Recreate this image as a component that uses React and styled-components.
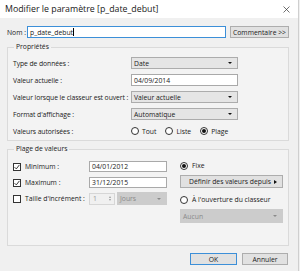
import React from "react"
import styled, { createGlobalStyle } from "styled-components"

const FS = "6.8px"

const GlobalStyle = createGlobalStyle`
    html, body {
        margin: 0;
        padding: 0;
        background: #f0f0f0;
    }
    body {
        font-family: "Open Sans", "Liberation Sans", sans-serif;
        color: #1a1a1a;
    }
`

const Window = styled.div`
    width: 299px;
    height: 271px;
    box-sizing: border-box;
    border-right: 1px solid #cfcfcf;
    background: #f0f0f0;
    display: flex;
    flex-direction: column;
`

const TitleBar = styled.div`
    height: 18px;
    flex: none;
    background: #fff;
    display: flex;
    align-items: center;
    justify-content: space-between;
    padding: 0 8px 0 5px;
    font-size: 8.8px;
    color: #202020;
`

const Body = styled.div`
    flex: 1;
    display: flex;
    flex-direction: column;
    padding: 8px 9px 0 7px;
`

const NameRow = styled.div`
    display: flex;
    align-items: center;
    height: 12px;
    font-size: ${FS};
    label {
        width: 21px;
    }
`

const TextBox = styled.div`
    box-sizing: border-box;
    height: ${p => p.$h || 12}px;
    width: ${p => p.$w ? p.$w + "px" : "auto"};
    flex: ${p => p.$w ? "none" : 1};
    margin-right: ${p => p.$mr || 0}px;
    background: #fff;
    border: 1px solid ${p => p.$focus ? "#3c8fd8" : "#a9a9a9"};
    display: flex;
    align-items: center;
    padding-left: 2px;
    font-size: ${FS};
    .caret {
        display: inline-block;
        width: 1px;
        height: 8px;
        background: #000;
    }
`

const Button = styled.div`
    box-sizing: border-box;
    width: ${p => p.$w}px;
    height: ${p => p.$h || 12}px;
    background: #e1e1e1;
    border: 1px solid ${p => p.$default ? "#3c8fd8" : "#adadad"};
    display: flex;
    align-items: center;
    justify-content: ${p => p.$arrow ? "space-between" : "center"};
    padding: ${p => p.$arrow ? "0 5px 0 8px" : "0"};
    font-size: ${FS};
    color: #222;
    flex: none;
`

const RightArrow = styled.span`
    border-top: 2px solid transparent;
    border-bottom: 2px solid transparent;
    border-left: 3px solid #111;
`

const Group = styled.fieldset`
    margin: ${p => p.$top}px 0 0 0;
    padding: ${p => p.$pt}px 5px ${p => p.$pb}px 5px;
    border: 1px solid #dadada;
    background: #f3f3f3;
    min-width: 0;
    legend {
        padding: 0 2px;
        margin-left: 1px;
        font-size: ${FS};
        line-height: 10px;
        color: #222;
    }
`

const FieldList = styled.div`
    display: flex;
    flex-direction: column;
    gap: 5px;
    font-size: ${FS};
`

const FieldRow = styled.div`
    display: flex;
    align-items: center;
    height: 12px;
`

const FieldLabel = styled.span`
    width: 118px;
    flex: none;
    white-space: nowrap;
    letter-spacing: -0.08px;
`

const Select = styled.div`
    box-sizing: border-box;
    height: ${p => p.$h || 12}px;
    width: ${p => p.$w || 107}px;
    flex: none;
    background: ${p => p.$disabled ? "#cccccc" : "#e5e5e5"};
    border: 1px solid ${p => p.$disabled ? "#cccccc" : "#acacac"};
    display: flex;
    align-items: center;
    justify-content: space-between;
    padding: 0 5px 0 2px;
    font-size: ${FS};
    color: ${p => p.$disabled ? "#8a8a8a" : "#1a1a1a"};
    &::after {
        content: "";
        border-left: 2px solid transparent;
        border-right: 2px solid transparent;
        border-top: 2px solid ${p => p.$disabled ? "#8a8a8a" : "#111"};
    }
`

const RadioGroup = styled.div`
    display: flex;
    align-items: center;
    gap: 9px;
`

const RadioLabel = styled.span`
    display: flex;
    align-items: center;
    gap: 3px;
`

const Radio = styled.span`
    box-sizing: border-box;
    width: 8px;
    height: 8px;
    flex: none;
    border-radius: 50%;
    border: 1px solid #333;
    background: #fff;
    display: flex;
    align-items: center;
    justify-content: center;
    &::after {
        content: "";
        width: 4px;
        height: 4px;
        border-radius: 50%;
        background: ${p => p.$checked ? "#111" : "transparent"};
    }
`

const Check = styled.span`
    box-sizing: border-box;
    width: 8px;
    height: 8px;
    border: 1px solid #333;
    background: #fff;
    display: flex;
    align-items: center;
    justify-content: center;
    flex: none;
`

const RangeBody = styled.div`
    display: flex;
    justify-content: space-between;
    font-size: ${FS};
`

const LeftCol = styled.div`
    display: flex;
    flex-direction: column;
    gap: 5px;
    padding-top: 1px;
`

const CheckRow = styled.div`
    display: flex;
    align-items: center;
    height: 11px;
`

const CheckLabel = styled.span`
    width: ${p => p.$w ? p.$w + "px" : "auto"};
    margin-left: 4px;
    white-space: nowrap;
`

const Spinner = styled.div`
    box-sizing: border-box;
    width: 26px;
    height: 12px;
    border: 1px solid #d6d6d6;
    background: #f0f0f0;
    color: #9a9a9a;
    display: flex;
    align-items: center;
    justify-content: space-between;
    padding: 0 3px;
    margin-right: 2px;
    .arrows {
        display: flex;
        flex-direction: column;
        gap: 1px;
    }
    .up, .down {
        border-left: 1.5px solid transparent;
        border-right: 1.5px solid transparent;
    }
    .up { border-bottom: 2px solid #9a9a9a; }
    .down { border-top: 2px solid #9a9a9a; }
`

const RightCol = styled.div`
    width: 103px;
    display: flex;
    flex-direction: column;
`

const Gap = styled.div`
    height: ${p => p.$h}px;
    flex: none;
`

const Footer = styled.div`
    display: flex;
    justify-content: flex-end;
    gap: 5px;
    margin-top: 7px;
    padding-right: 1px;
`

function CheckBox({ checked }) {
    return (
        <Check>
            {checked && (
                <svg width="6" height="6" viewBox="0 0 6 6">
                    <path d="M0.6 3.2 L2.3 4.9 L5.4 0.9" fill="none" stroke="#222" strokeWidth="0.9" />
                </svg>
            )}
        </Check>
    )
}

export default function App() {
    return (
        <Window>
            <GlobalStyle />
            <TitleBar>
                <span>Modifier le paramètre [p_date_debut]</span>
                <svg width="7" height="7" viewBox="0 0 7 7">
                    <path d="M0.5 0.5 L6.5 6.5 M6.5 0.5 L0.5 6.5" stroke="#333" strokeWidth="0.7" />
                </svg>
            </TitleBar>
            <Body>
                <NameRow>
                    <label>Nom :</label>
                    <TextBox $focus $w={199} $mr={4}>p_date_debut<span className="caret" /></TextBox>
                    <Button $w={59}>Commentaire &gt;&gt;</Button>
                </NameRow>

                <Group $top={4} $pt={5} $pb={3}>
                    <legend>Propriétés</legend>
                    <FieldList>
                        <FieldRow>
                            <FieldLabel>Type de données :</FieldLabel>
                            <Select>Date</Select>
                        </FieldRow>
                        <FieldRow>
                            <FieldLabel>Valeur actuelle :</FieldLabel>
                            <TextBox $w={107}>04/09/2014</TextBox>
                        </FieldRow>
                        <FieldRow>
                            <FieldLabel>Valeur lorsque le classeur est ouvert :</FieldLabel>
                            <Select>Valeur actuelle</Select>
                        </FieldRow>
                        <FieldRow>
                            <FieldLabel>Format d'affichage :</FieldLabel>
                            <Select>Automatique</Select>
                        </FieldRow>
                        <FieldRow>
                            <FieldLabel>Valeurs autorisées :</FieldLabel>
                            <RadioGroup>
                                <RadioLabel><Radio />Tout</RadioLabel>
                                <RadioLabel><Radio />Liste</RadioLabel>
                                <RadioLabel><Radio $checked />Plage</RadioLabel>
                            </RadioGroup>
                        </FieldRow>
                    </FieldList>
                </Group>

                <Group $top={3} $pt={6} $pb={22}>
                    <legend>Plage de valeurs</legend>
                    <RangeBody>
                        <LeftCol>
                            <CheckRow>
                                <CheckBox checked />
                                <CheckLabel $w={64}>Minimum :</CheckLabel>
                                <TextBox $w={78} $h={11}>04/01/2012</TextBox>
                            </CheckRow>
                            <CheckRow>
                                <CheckBox checked />
                                <CheckLabel $w={64}>Maximum :</CheckLabel>
                                <TextBox $w={78} $h={11}>31/12/2015</TextBox>
                            </CheckRow>
                            <CheckRow>
                                <CheckBox />
                                <CheckLabel $w={64}>Taille d'incrément :</CheckLabel>
                                <Spinner>
                                    <span>1</span>
                                    <span className="arrows"><span className="up" /><span className="down" /></span>
                                </Spinner>
                                <Select $disabled $w={50} $h={13}>Jours</Select>
                            </CheckRow>
                        </LeftCol>
                        <RightCol>
                            <CheckRow><Radio $checked /><CheckLabel>Fixe</CheckLabel></CheckRow>
                            <Gap $h={4} />
                            <Button $w={103} $h={13} $arrow>
                                <span>Définir des valeurs depuis</span>
                                <RightArrow />
                            </Button>
                            <Gap $h={6} />
                            <CheckRow><Radio /><CheckLabel>À l'ouverture du classeur</CheckLabel></CheckRow>
                            <Gap $h={4} />
                            <Select $disabled $w={103} $h={14}>Aucun</Select>
                        </RightCol>
                    </RangeBody>
                </Group>

                <Footer>
                    <Button $w={47} $default>OK</Button>
                    <Button $w={46}>Annuler</Button>
                </Footer>
            </Body>
        </Window>
    )
}
